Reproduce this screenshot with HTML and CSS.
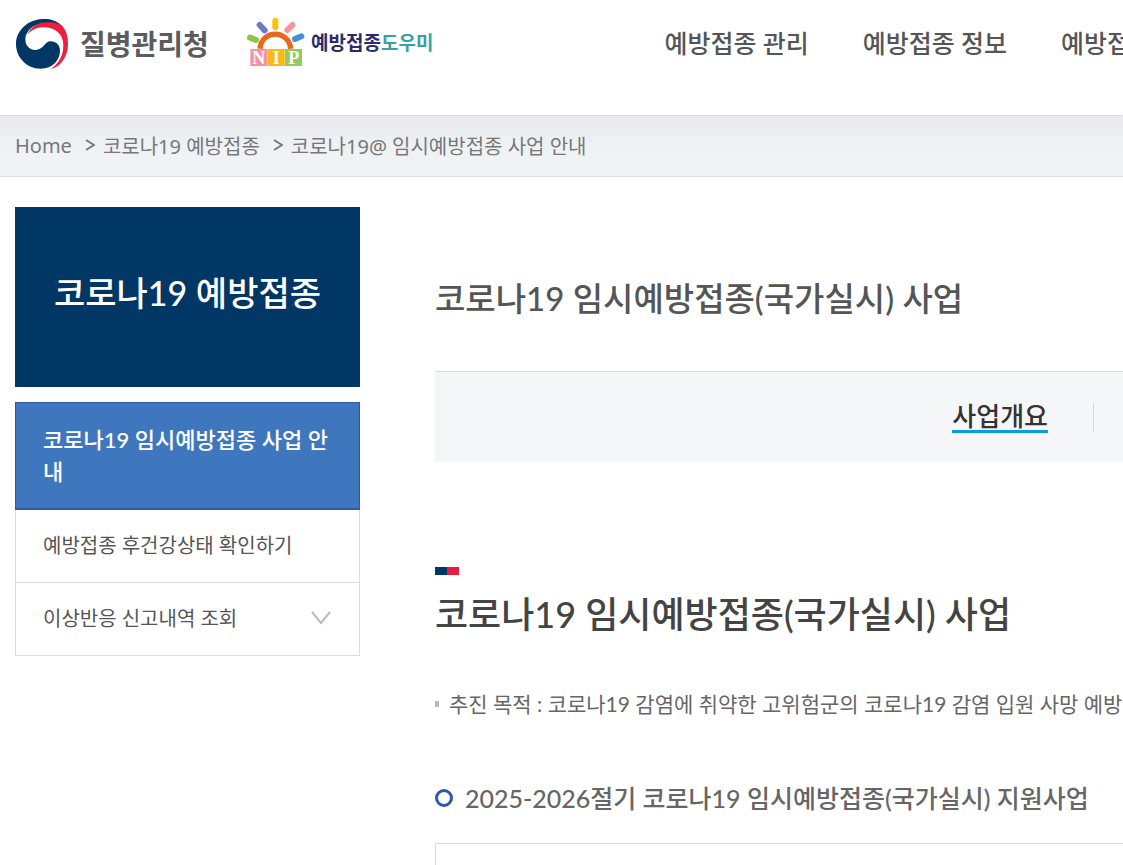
FILE: index.html
```
<!DOCTYPE html>
<html lang="ko">
<head>
    <meta charset="UTF-8">
    <meta name="viewport" content="width=device-width, initial-scale=1.0">
    <title>코로나19 임시예방접종 사업 안내</title>
    <link rel="stylesheet" href="styles.css">
</head>
<body>
    <header class="header">
        <a href="#" class="logo-kdca">
            <svg width="52" height="50" viewBox="48 57 156 150" aria-hidden="true">
                <path fill="#003764" d="M190 82C170 58 140 54 118 58C78 64 48 95 48 132C48 172 80 206 122 206C158 206 180 180 180 152C180 135 168 124 152 124C134 124 132 148 108 150C90 151 76 138 76 118C76 95 100 70 135 70C158 68 175 72 190 82Z"/>
                <path fill="#f01e3c" d="M82 104C92 80 116 67 140 67C160 66 180 70 190 82C200 95 204 112 204 132C204 165 185 200 152 207C178 190 190 165 190 135C190 102 165 82 132 82C110 82 94 90 82 104Z"/>
            </svg>
            <span>질병관리청</span>
        </a>
        <a href="#" class="logo-nip">
            <svg width="59" height="49" viewBox="33 51 177 147" aria-hidden="true">
                <g fill="none" stroke-linecap="round" stroke-width="18">
                    <path stroke="#8cc63f" d="M45 113L63 120"/>
                    <path stroke="#6b7cc4" d="M74 75L89 91"/>
                    <path stroke="#fcc30b" d="M121 62L121 82"/>
                    <path stroke="#f7929f" d="M172 75L157 90"/>
                    <path stroke="#4a90d9" d="M199 109L180 117"/>
                </g>
                <path fill="none" stroke="#e9681c" stroke-width="16" d="M75 146C80 88 161 88 167 146"/>
                <rect x="46" y="147" width="51" height="51" fill="#f5929f"/>
                <rect x="98" y="147" width="51" height="51" fill="#fcb913"/>
                <rect x="150" y="147" width="51" height="51" fill="#93cb5c"/>
                <g class="nip-letters" fill="#fff" text-anchor="middle">
                    <text x="71" y="191">N</text>
                    <text x="124" y="191">I</text>
                    <text x="176" y="191">P</text>
                </g>
            </svg>
            <span>예방접종<em>도우미</em></span>
        </a>
        <nav class="gnb">
            <a href="#">예방접종 관리</a>
            <a href="#">예방접종 정보</a>
            <a href="#">예방접종</a>
        </nav>
    </header>

    <nav class="breadcrumb">
        <a href="#">Home</a>
        <svg width="10" height="14" viewBox="0 0 10 14" aria-hidden="true"><path d="M1 2L9 7L1 12"/></svg>
        <a href="#">코로나19 예방접종</a>
        <svg width="10" height="14" viewBox="0 0 10 14" aria-hidden="true"><path d="M1 2L9 7L1 12"/></svg>
        <a href="#">코로나19@ 임시예방접종 사업 안내</a>
    </nav>

    <div class="container">
        <aside class="sidebar">
            <h2 class="side-title">코로나19 예방접종</h2>
            <ul class="side-menu">
                <li class="active"><a href="#">코로나19 임시예방접종 사업 안내</a></li>
                <li><a href="#">예방접종 후건강상태 확인하기</a></li>
                <li>
                    <a href="#">이상반응 신고내역 조회
                        <svg width="20" height="14" viewBox="0 0 20 14" aria-hidden="true"><path d="M1 1L10 12L19 1"/></svg>
                    </a>
                </li>
            </ul>
        </aside>

        <main class="content">
            <h1>코로나19 임시예방접종(국가실시) 사업</h1>
            <div class="tabs">
                <a href="#" class="tab"><span>사업개요</span></a>
            </div>
            <div class="mark"></div>
            <h2>코로나19 임시예방접종(국가실시) 사업</h2>
            <ul class="purpose">
                <li>추진 목적 : 코로나19 감염에 취약한 고위험군의 코로나19 감염 입원 사망 예방</li>
            </ul>
            <h3>2025-2026절기 코로나19 임시예방접종(국가실시) 지원사업</h3>
            <div class="box"></div>
        </main>
    </div>
</body>
</html>
```
FILE: styles.css
```
* {
    box-sizing: border-box;
}
body {
    font-family: Lato, "Noto Sans CJK KR", sans-serif;
    color: #555;
    background-color: #fff;
    margin: 0;
    height: 100vh;
    overflow: hidden;
}
a {
    color: inherit;
    text-decoration: none;
}
ul {
    list-style: none;
    margin: 0;
    padding: 0;
}
h1, h2, h3 {
    margin: 0;
    font-weight: 500;
    white-space: nowrap;
}

/* header */
.header {
    display: flex;
    height: 115px;
    padding: 0 0 28px 16px;
    align-items: center;
    white-space: nowrap;
    overflow: hidden;
}
.logo-kdca, .logo-nip {
    display: flex;
    align-items: center;
    flex-shrink: 0;
    font-weight: 700;
}
.logo-kdca {
    gap: 12px;
    width: 230px;
    font-size: 28px;
    line-height: 50px;
    color: #5b5c5e;
}
.logo-nip {
    gap: 6px;
    padding-bottom: 4px;
    font-size: 19px;
    color: #2b2a6b;
}
.logo-nip em {
    font-style: normal;
    color: #35a3a0;
}
.nip-letters {
    font: bold 54px "Liberation Serif", serif;
}
.gnb {
    display: flex;
    flex-shrink: 0;
    gap: 54px;
    margin-left: 231px;
    padding-bottom: 4px;
    font-size: 25px;
    font-weight: 500;
}

/* breadcrumb */
.breadcrumb {
    display: flex;
    align-items: center;
    height: 62px;
    padding: 0 15px 2px;
    border-top: 1px solid #d9dcde;
    border-bottom: 1px solid #d9dcde;
    background: linear-gradient(#e7ebee, #eff3f6 60%);
    font-family: "Noto Sans", "Noto Sans CJK KR", sans-serif;
    font-size: 20px;
    color: #777;
    white-space: nowrap;
}
.breadcrumb svg {
    margin: 0 8px 0 13px;
    fill: none;
    stroke: #777;
    stroke-width: 2;
}

.container {
    display: flex;
    gap: 75px;
    padding: 30px 0 0 15px;
}

/* sidebar */
.sidebar {
    flex: 0 0 345px;
}
.side-title {
    display: flex;
    align-items: center;
    justify-content: center;
    height: 180px;
    margin-bottom: 15px;
    padding-bottom: 12px;
    background-color: #003764;
    color: #fff;
    font-size: 34px;
}
.side-menu li {
    border: 1px solid #ddd;
    border-top: 0;
    font-size: 20px;
    line-height: 32px;
}
.side-menu a {
    display: flex;
    align-items: center;
    justify-content: space-between;
    padding: 19px 28px 21px 27px;
}
.side-menu .active {
    border: 1px solid #2d59a8;
    border-bottom-width: 2px;
    background-color: #3f77be;
    color: #fff;
    font-size: 22px;
    font-weight: 500;
}
.side-menu .active a {
    padding: 21px 28px 20px 27px;
    word-break: break-all;
}
.side-menu svg {
    fill: none;
    stroke: #bbb;
    stroke-width: 2;
}

/* content */
.content {
    flex: 1;
    min-width: 0;
    overflow: hidden;
}
.content h1 {
    padding: 66px 0 48px;
    font-size: 33px;
    line-height: 50px;
}
.tabs {
    display: flex;
    justify-content: flex-end;
    align-items: center;
    height: 91px;
    padding: 2px 29px 0 0;
    border-top: 1px solid #d9dcde;
    background-color: #f5f6f8;
}
.tab {
    padding: 0 45px;
    border-right: 1px solid #d5d8da;
    font-size: 26px;
    font-weight: 500;
    line-height: 27px;
    color: #333;
}
.tab span {
    display: block;
    border-bottom: 3px solid #0c9be0;
}
.mark {
    width: 24px;
    height: 8px;
    margin: 105px 0 14px;
    background: linear-gradient(90deg, #003764 50%, #e71d3f 50%);
}
.content h2 {
    font-size: 36px;
    line-height: 50px;
    color: #444;
}
.purpose {
    margin: 49px 0 60px;
    font-size: 21px;
    line-height: 32px;
    color: #666;
    white-space: nowrap;
}
.purpose li {
    display: flex;
    align-items: center;
    gap: 10px;
}
.purpose li::before {
    content: "";
    flex-shrink: 0;
    width: 4px;
    height: 6px;
    background-color: #bbb;
}
.content h3 {
    display: flex;
    align-items: center;
    gap: 12px;
    margin-bottom: 27px;
    font-size: 25px;
    line-height: 36px;
    color: #666;
}
.content h3::before {
    content: "";
    width: 12px;
    height: 12px;
    border: 3px solid #2d59a8;
    border-radius: 50%;
}
.box {
    height: 120px;
    border: 1px solid #d9dcde;
    border-right: 0;
}
```
